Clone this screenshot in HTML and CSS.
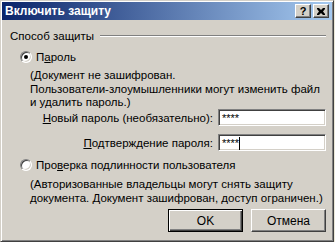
FILE: index.html
```html
<!DOCTYPE html>
<html lang="ru">
<head>
    <meta charset="UTF-8">
    <title>Включить защиту</title>
    <link rel="stylesheet" href="styles.css">
</head>
<body>
    <div class="dialog">
        <div class="titlebar">
            <span class="title">Включить защиту</span>
            <div class="caption-buttons">
                <button class="caption-btn help">?</button>
                <button class="caption-btn close">
                    <svg width="8" height="7" viewBox="0 0 8 7">
                        <path d="M0 0h2l2 2 2-2h2v1l-2 2.5 2 2.5v1h-2l-2-2-2 2h-2v-1l2-2.5-2-2.5z" fill="#000"/>
                    </svg>
                </button>
            </div>
        </div>

        <div class="content">
            <div class="group-title">
                <span>Способ защиты</span>
                <div class="etched-line"></div>
            </div>

            <label class="radio-row first">
                <span class="radio checked"></span>
                <span>П<u>а</u>роль</span>
            </label>
            <p class="note">(Документ не зашифрован.<br>Пользователи-злоумышленники могут изменить файл<br>и удалить пароль.)</p>

            <div class="field-row">
                <span class="field-label"><u>Н</u>овый пароль (необязательно):</span>
                <div class="textbox">****</div>
            </div>
            <div class="field-row">
                <span class="field-label"><u>П</u>одтверждение пароля:</span>
                <div class="textbox">****<span class="caret"></span></div>
            </div>

            <label class="radio-row second">
                <span class="radio"></span>
                <span>Про<u>в</u>ерка подлинности пользователя</span>
            </label>
            <p class="note second-note">(Авторизованные владельцы могут снять защиту<br>документа. Документ зашифрован, доступ ограничен.)</p>

            <div class="actions">
                <button class="btn default">OK</button>
                <button class="btn">Отмена</button>
            </div>
        </div>
    </div>
</body>
</html>
```

FILE: styles.css
```css
body {
    margin: 0;
    background-color: #ece9d8;
    font-family: "Liberation Sans", Arial, sans-serif;
    font-size: 11.5px;
    color: #000;
}

.dialog {
    width: 334px;
    height: 242px;
    box-sizing: border-box;
    padding: 1px;
    background-color: #d4d0c8;
    border: 1px solid;
    border-color: #d4d0c8 #404040 #404040 #d4d0c8;
    box-shadow: inset 1px 1px #fff, inset -1px -1px #808080;
    display: flex;
    flex-direction: column;
    overflow: hidden;
}

.titlebar {
    height: 18px;
    flex-shrink: 0;
    display: flex;
    align-items: center;
    justify-content: space-between;
    padding: 0 3px 0 3px;
    background: linear-gradient(to right, #0a246a, #a6caf0);
}

.title {
    color: #fff;
    font-weight: bold;
    font-size: 12px;
}

.caption-buttons {
    display: flex;
    gap: 2px;
}

.caption-btn {
    width: 16px;
    height: 14px;
    padding: 0;
    margin: 0;
    background-color: #d4d0c8;
    border: 1px solid;
    border-color: #fff #404040 #404040 #fff;
    box-shadow: inset -1px -1px #808080;
    display: flex;
    align-items: center;
    justify-content: center;
    font-family: "Liberation Sans", Arial, sans-serif;
    font-weight: bold;
    font-size: 11px;
    line-height: 1;
}

.content {
    flex: 1;
    padding: 9px 6px 0 8px;
    display: flex;
    flex-direction: column;
    white-space: nowrap;
}

.group-title {
    display: flex;
    align-items: center;
    gap: 6px;
    height: 13px;
}

.etched-line {
    flex: 1;
    border-top: 1px solid #808080;
    border-bottom: 1px solid #fff;
}

.radio-row {
    display: flex;
    align-items: center;
    gap: 4px;
    height: 13px;
    margin-left: 10px;
}

.radio-row.first {
    margin-top: 8px;
}

.radio-row.second {
    margin-top: 7px;
}

.radio {
    width: 12px;
    height: 12px;
    box-sizing: border-box;
    border-radius: 50%;
    border: 1px solid;
    border-color: #808080 #fff #fff #808080;
    box-shadow: inset 1px 1px #404040, inset -1px -1px #d4d0c8;
    background-color: #fff;
    display: flex;
    align-items: center;
    justify-content: center;
}

.radio.checked::after {
    content: "";
    width: 4px;
    height: 4px;
    border-radius: 50%;
    background-color: #000;
}

.note {
    margin: 6px 0 0 20px;
    line-height: 13.7px;
}

.second-note {
    margin-top: 6px;
    line-height: 14px;
}

.field-row {
    display: flex;
    justify-content: flex-end;
    align-items: center;
    gap: 5px;
    margin-top: -1px;
}

.field-row + .field-row {
    margin-top: 8px;
}

.textbox {
    width: 108px;
    height: 17px;
    box-sizing: border-box;
    background-color: #fff;
    border: 1px solid;
    border-color: #808080 #fff #fff #808080;
    box-shadow: inset 1px 1px #404040, inset -1px -1px #d4d0c8;
    padding: 2px 2px 0 3px;
    font-size: 11px;
    line-height: 13px;
    display: flex;
    align-items: center;
}

.caret {
    width: 1px;
    height: 13px;
    background-color: #000;
}

.actions {
    display: flex;
    justify-content: flex-end;
    gap: 8px;
    margin-top: auto;
    margin-bottom: 8px;
}

.btn {
    width: 75px;
    height: 23px;
    padding: 0;
    background-color: #d4d0c8;
    border: 1px solid;
    border-color: #fff #404040 #404040 #fff;
    box-shadow: inset -1px -1px #808080;
    font-family: "Liberation Sans", Arial, sans-serif;
    font-size: 12px;
    color: #000;
}

.btn.default {
    border: 1px solid #000;
    box-shadow: inset 1px 1px #fff, inset -1px -1px #404040, inset -2px -2px #808080;
}
```
